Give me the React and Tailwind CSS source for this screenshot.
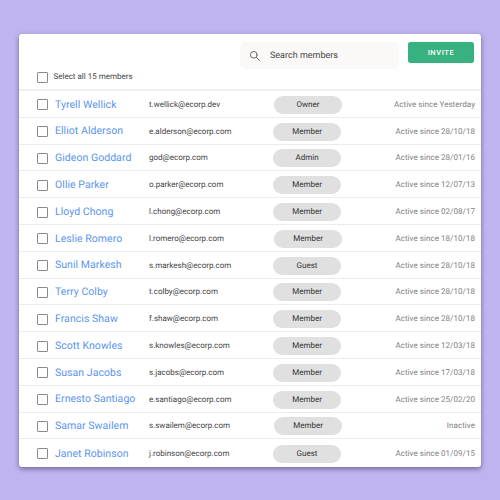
const rows = [
  ["Tyrell Wellick", "t.wellick@ecorp.dev", "Owner", "Active since Yesterday", "ml-px"],
  ["Elliot Alderson", "e.alderson@ecorp.com", "Member", "Active since 28/10/18", "ml-0"],
  ["Gideon Goddard", "god@ecorp.com", "Admin", "Active since 28/01/16", "ml-0"],
  ["Ollie Parker", "o.parker@ecorp.com", "Member", "Active since 12/07/13", "ml-0"],
  ["Lloyd Chong", "l.chong@ecorp.com", "Member", "Active since 02/08/17", "ml-0"],
  ["Leslie Romero", "l.romero@ecorp.com", "Member", "Active since 18/10/18", "ml-px"],
  ["Sunil Markesh", "s.markesh@ecorp.com", "Guest", "Active since 28/10/18", "ml-0"],
  ["Terry Colby", "t.colby@ecorp.com", "Member", "Active since 28/10/18", "ml-0"],
  ["Francis Shaw", "f.shaw@ecorp.com", "Member", "Active since 28/10/18", "ml-0"],
  ["Scott Knowles", "s.knowles@ecorp.com", "Member", "Active since 12/03/18", "ml-0"],
  ["Susan Jacobs", "s.jacobs@ecorp.com", "Member", "Active since 17/03/18", "ml-0"],
  ["Ernesto Santiago", "e.santiago@ecorp.com", "Member", "Active since 25/02/20", "ml-0"],
  ["Samar Swailem", "s.swailem@ecorp.com", "Member", "Inactive", "ml-px"],
  ["Janet Robinson", "j.robinson@ecorp.com", "Guest", "Active since 01/09/15", "ml-0"],
];

function Box() {
  return <span className="block w-[11px] h-[11px] border-[1.25px] border-[#8a8a8a] rounded-[1px] shrink-0" />;
}

export default function App() {
  return (
    <div className="w-[500px] h-[500px] bg-[#bfb4ef] pt-[33.5px] px-[19px] overflow-hidden font-['Roboto',sans-serif] [text-rendering:geometricPrecision]">
      <div className="w-[462px] h-[433px] bg-white rounded-[3px] shadow-[0_2px_5px_rgba(50,40,90,0.55)] flex flex-col">
        <div className="h-[57.5px] shrink-0 pl-[17.5px] pr-[7px] flex justify-between border-b-2 border-[#f0f0f0]">
          <div className="flex items-center gap-[6px] self-end h-[24px]">
            <Box />
            <span className="text-[8px] leading-none text-[#444]">Select all 15 members</span>
          </div>
          <div className="flex items-start gap-[9px] pt-[8.5px]">
            <div className="w-[159px] h-[27px] bg-[#faf9f8] rounded-[5px] flex items-center pt-px pl-[9px] gap-[9.5px]">
              <svg width="11.5" height="11.5" viewBox="0 0 24 24" fill="none" stroke="#666" strokeWidth="2" strokeLinecap="round">
                <circle cx="10" cy="10" r="7" />
                <path d="M15.5 15.5L22 22" />
              </svg>
              <span className="text-[9px] leading-none text-[#444]">Search members</span>
            </div>
            <button className="w-[66px] h-[21px] bg-[#37b180] rounded-[3px] text-white text-[7.5px] font-medium tracking-[0.6px] leading-none shadow-[0_0_1px_rgba(0,0,0,0.3)]">
              INVITE
            </button>
          </div>
        </div>
        {rows.map(([name, email, role, status, off], i) => (
          <div key={name} className={`h-[26.8px] shrink-0 flex items-center pt-[2px] pl-[17.5px] pr-[6px] ${i < rows.length - 1 ? "border-b border-[#ececec]" : ""}`}>
            <Box />
            <span className="ml-[7.5px] w-[94px] text-[10.5px] leading-none text-[#5b95ee] tracking-[0.05px] whitespace-nowrap">{name}</span>
            <span className="w-[124px] text-[8px] leading-none text-[#444] whitespace-nowrap">{email}</span>
            <span className={`${off} w-[68px] h-[18px] rounded-full bg-[#e0e0e0] flex items-center justify-center text-[8px] leading-none text-[#333]`}>{role}</span>
            <span className="ml-auto text-[8px] leading-none text-[#808080] tracking-[0.05px] whitespace-nowrap">{status}</span>
          </div>
        ))}
      </div>
    </div>
  );
}
